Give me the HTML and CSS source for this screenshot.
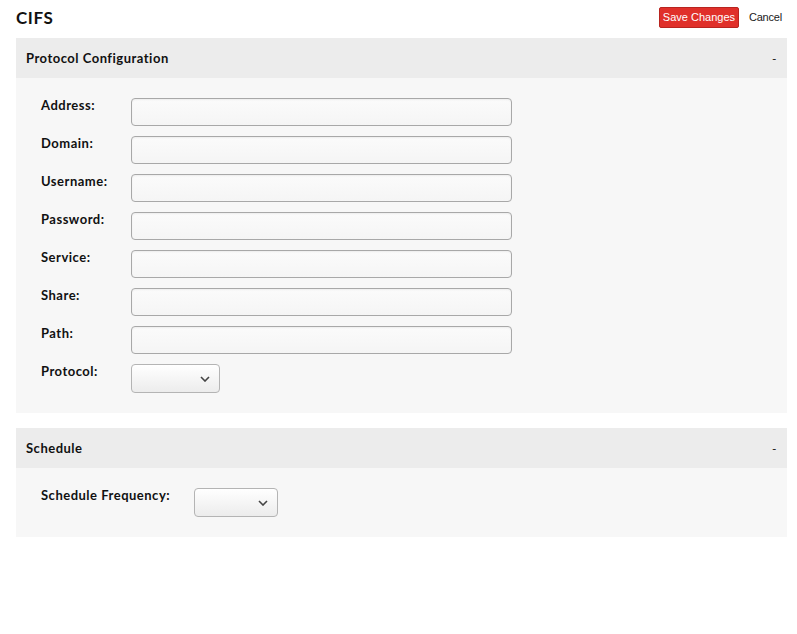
FILE: index.html
```html
<!DOCTYPE html>
<html>
<head>
<meta charset="utf-8">
<link rel="stylesheet" href="styles.css">
</head>
<body>
<div class="page">
  <div class="topbar">
    <h1 class="title">CIFS</h1>
    <div class="actions">
      <button class="btn-save">Save Changes</button>
      <a class="cancel">Cancel</a>
    </div>
  </div>

  <section class="panel">
    <div class="panel-head"><span>Protocol Configuration</span><span class="toggle">-</span></div>
    <div class="panel-body">
      <div class="row"><label class="lbl">Address:</label><input class="txt" type="text"></div>
      <div class="row"><label class="lbl">Domain:</label><input class="txt" type="text"></div>
      <div class="row"><label class="lbl">Username:</label><input class="txt" type="text"></div>
      <div class="row"><label class="lbl">Password:</label><input class="txt" type="text"></div>
      <div class="row"><label class="lbl">Service:</label><input class="txt" type="text"></div>
      <div class="row"><label class="lbl">Share:</label><input class="txt" type="text"></div>
      <div class="row"><label class="lbl">Path:</label><input class="txt" type="text"></div>
      <div class="row"><label class="lbl">Protocol:</label>
        <div class="sel sel-proto"><svg class="chev" width="10" height="6" viewBox="0 0 10 6"><path d="M1 1 L5 5 L9 1" fill="none" stroke="#444" stroke-width="1.6"/></svg></div>
      </div>
    </div>
  </section>

  <section class="panel">
    <div class="panel-head"><span>Schedule</span><span class="toggle">-</span></div>
    <div class="panel-body">
      <div class="row"><label class="lbl lbl-auto">Schedule Frequency:</label>
        <div class="sel sel-sched"><svg class="chev" width="10" height="6" viewBox="0 0 10 6"><path d="M1 1 L5 5 L9 1" fill="none" stroke="#444" stroke-width="1.6"/></svg></div>
      </div>
    </div>
  </section>
</div>
</body>
</html>
```

FILE: styles.css
```css
html, body {
  margin: 0;
  padding: 0;
  background: #fff;
}
.page {
  padding: 0 10px 0 16px;
  font-family: Lato, "Open Sans", sans-serif;
  color: #111;
}
.topbar {
  height: 38px;
  display: flex;
  align-items: center;
  justify-content: space-between;
  padding-bottom: 4px;
  box-sizing: border-box;
}
.title {
  margin: 0;
  font-size: 17px;
  font-weight: 700;
  letter-spacing: 0.6px;
}
.actions {
  display: flex;
  align-items: center;
  margin-right: 5px;
}
.btn-save {
  width: 80px;
  height: 21px;
  padding: 0;
  background: #e0302a;
  border: 1px solid #b8241f;
  border-radius: 2px;
  color: #fff;
  font-family: "Liberation Sans", Arial, sans-serif;
  font-size: 11px;
}
.cancel {
  margin-left: 10px;
  font-family: "Liberation Sans", Arial, sans-serif;
  font-size: 11px;
  letter-spacing: -0.2px;
  color: #1a1a1a;
}
.panel {
  background: #f7f7f7;
  margin-bottom: 15px;
}
.panel-head {
  height: 40px;
  background: #ececec;
  display: flex;
  align-items: center;
  justify-content: space-between;
  padding: 0 10px;
  font-size: 13px;
  font-weight: 700;
  letter-spacing: 0.5px;
}
.toggle {
  font-weight: 400;
  font-size: 12px;
  margin-right: 0;
}
.panel-body {
  padding: 20px 25px;
  display: flex;
  flex-direction: column;
  gap: 10px;
}
.row {
  display: flex;
  align-items: flex-start;
}
.lbl {
  width: 90px;
  flex: none;
  font-size: 13px;
  font-weight: 700;
  line-height: 15px;
  letter-spacing: 0.5px;
}
.lbl-auto {
  width: auto;
  margin-right: 24px;
}
.txt {
  width: 381px;
  height: 28px;
  box-sizing: border-box;
  margin: 0;
  border: 1px solid #a8a8a8;
  border-radius: 4px;
  background: linear-gradient(#fbfbfb, #f5f5f5);
  box-shadow: inset 0 1px 2px rgba(0,0,0,0.06);
}
.sel {
  position: relative;
  height: 29px;
  box-sizing: border-box;
  border: 1px solid #b4b4b4;
  border-radius: 4px;
  background: linear-gradient(#ffffff, #ececec);
}
.sel-proto { width: 89px; }
.sel-sched { width: 84px; }
.chev {
  position: absolute;
  right: 9px;
  top: 11px;
}
```
